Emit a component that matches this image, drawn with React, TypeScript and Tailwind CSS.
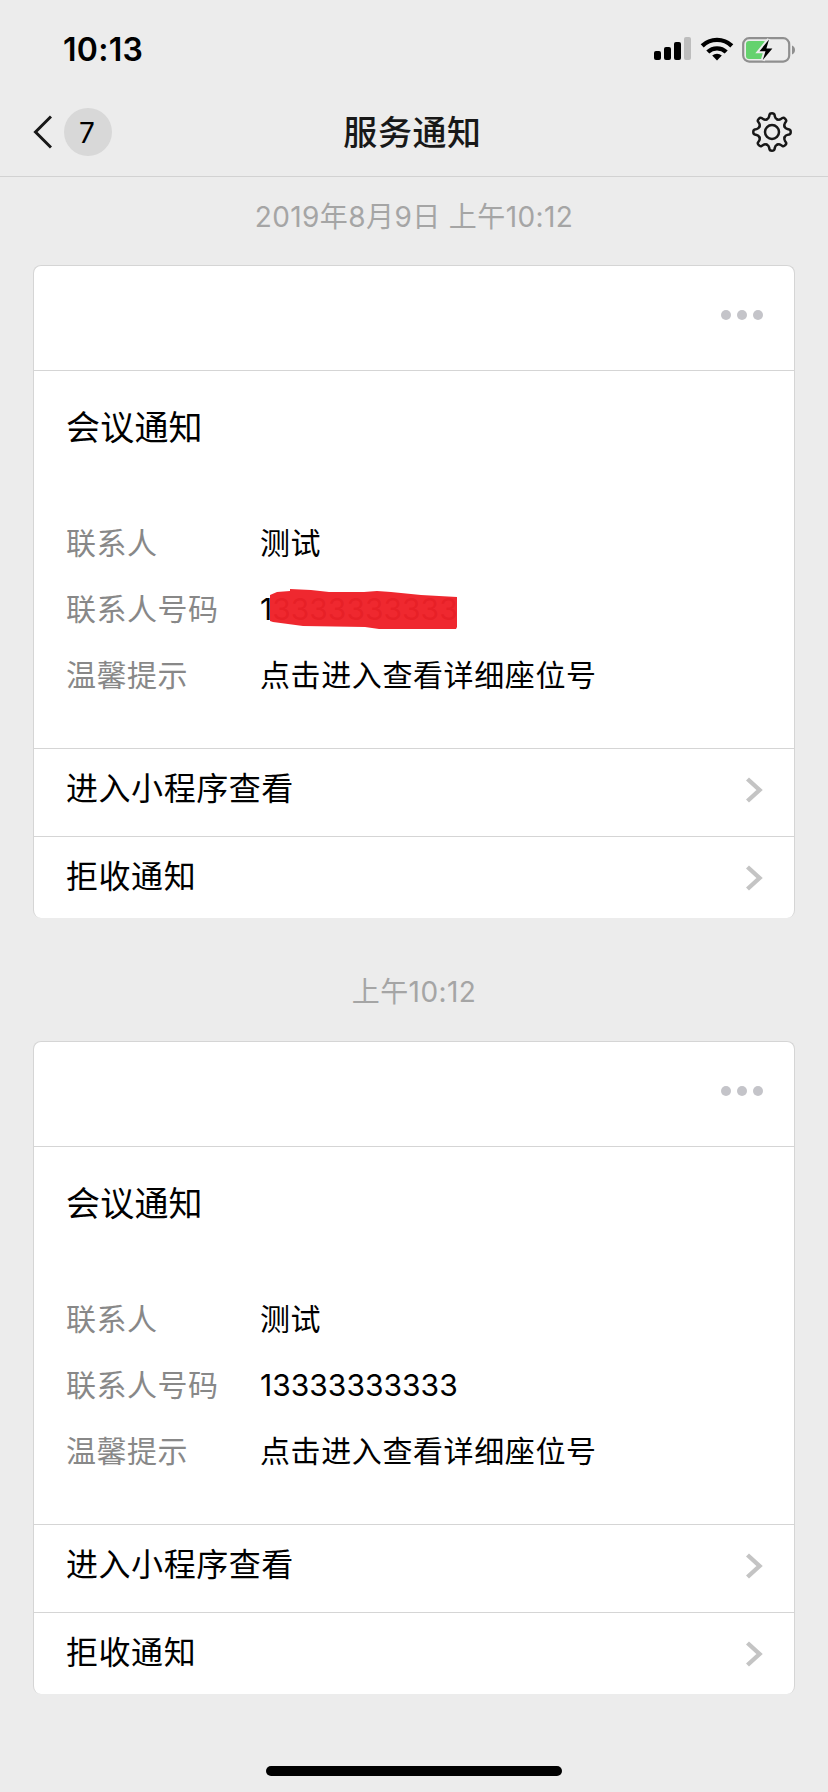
import { clsx } from "clsx";

interface Notice {
  time: string;
  contact: string;
  phone: string;
  tip: string;
  redacted?: boolean;
}

const notices: Notice[] = [
  {
    time: "2019年8月9日 上午10:12",
    contact: "测试",
    phone: "13333333333",
    tip: "点击进入查看详细座位号",
    redacted: true,
  },
  {
    time: "上午10:12",
    contact: "测试",
    phone: "13333333333",
    tip: "点击进入查看详细座位号",
  },
];

const SignalIcon = () => (
  <svg width="38" height="24" viewBox="0 0 38 24">
    <rect x="0" y="14" width="7" height="9" rx="2" />
    <rect x="10" y="10" width="7" height="13" rx="2" />
    <rect x="20" y="5" width="7" height="18" rx="2" />
    <rect x="30" y="0" width="7" height="23" rx="2" fill="#bdbdbd" />
  </svg>
);

const WifiIcon = () => (
  <svg width="34" height="24" viewBox="0 0 34 24" fill="none" stroke="#000" strokeWidth="4.4">
    <path d="M2.2 8.8a21.5 21.5 0 0 1 29.6 0" />
    <path d="M7.8 15a13.4 13.4 0 0 1 18.4 0" />
    <path d="M12.2 18.6a7.2 7.2 0 0 1 9.6 0L17 23.4z" fill="#000" stroke="none" />
  </svg>
);

const BatteryIcon = () => (
  <svg width="54" height="26" viewBox="0 0 54 26">
    <rect x="1.2" y="1.2" width="46" height="23.4" rx="6" fill="none" stroke="#8f8f8f" strokeWidth="2.2" />
    <path d="M50 8.5c4 1.4 4 7.6 0 9z" fill="#8f8f8f" />
    <rect x="4" y="4" width="20" height="18" rx="3" fill="#65d26e" />
    <path d="M27 2.5 17.5 14.2h6L20.8 23 30.4 11.4h-6z" fill="#000" stroke="#ededed" strokeWidth="4" paintOrder="stroke" />
  </svg>
);

const toothAngles = [0, 45, 90, 135, 180, 225, 270, 315];

const GearIcon = () => (
  <svg
    width="40"
    height="40"
    viewBox="-20 -20 40 40"
    fill="none"
    stroke="#181818"
    strokeWidth="2.5"
    strokeLinecap="round"
    strokeLinejoin="round"
  >
    {toothAngles.map((angle) => (
      <path
        key={angle}
        transform={`rotate(${angle})`}
        d="M-5.2 -12.6Q-3.3 -13.4 -2.9 -15.4L-2.5 -17.2Q-2.2 -18.7 0 -18.7Q2.2 -18.7 2.5 -17.2L2.9 -15.4Q3.3 -13.4 5.2 -12.6"
      />
    ))}
    <circle r="7" />
  </svg>
);

const ActionRow = ({ label, last }: { label: string; last?: boolean }) => (
  <div
    className={clsx(
      "flex items-start justify-between border-t border-[#d5d5d5] pl-8 pr-[31px]",
      last ? "h-[82px]" : "h-[88px]"
    )}
  >
    <span className="mt-[22px] text-[32px] leading-9 tracking-[0.55px]">{label}</span>
    <svg className="mt-[27px]" width="18" height="28" viewBox="0 0 18 28" fill="none" stroke="#c4c4c4" strokeWidth="4.4">
      <path d="M2.5 3 14.5 14 2.5 25" />
    </svg>
  </div>
);

const Scribble = () => (
  <svg className="absolute top-0 left-[9px]" width="190" height="42" viewBox="0 0 190 42">
    <path d="M1 7 8 4 21 3V1L42 2 60 4H95L108 3 122 4 152 7 188 9V39L187 41H110L96 39 34 38 4 34 1 33Z" fill="#ee2128" fillOpacity=".97" />
  </svg>
);

const Field = ({ label, value, redacted }: { label: string; value: string; redacted?: boolean }) => (
  <div className="flex h-[66px] items-center text-[30px]">
    <span className="w-[194px] tracking-[0.5px] text-[#888]">{label}</span>
    <span
      className={clsx(
        "relative whitespace-nowrap leading-[42px]",
        /^\d+$/.test(value) ? "tracking-[0.02px]" : "tracking-[0.6px]"
      )}
    >
      {value}
      {redacted && <Scribble />}
    </span>
  </div>
);

const NoticeCard = ({ notice }: { notice: Notice }) => (
  <section className="mx-[33px] flex h-[653px] flex-col overflow-hidden rounded-lg border border-b-0 border-[#d5d5d5] bg-white">
    <div className="flex h-[104px] shrink-0 justify-end gap-1.5 pr-[31px] pt-11">
      <i className="size-2.5 rounded-full bg-[#c4c4c9]" />
      <i className="size-2.5 rounded-full bg-[#c4c4c9]" />
      <i className="size-2.5 rounded-full bg-[#c4c4c9]" />
    </div>
    <div className="h-[378px] shrink-0 border-t border-[#d5d5d5] pl-8 pt-[37px]">
      <h2 className="mb-[62px] text-[34px] leading-10 tracking-[0.2px]">会议通知</h2>
      <Field label="联系人" value={notice.contact} />
      <Field label="联系人号码" value={notice.phone} redacted={notice.redacted} />
      <Field label="温馨提示" value={notice.tip} />
    </div>
    <ActionRow label="进入小程序查看" />
    <ActionRow label="拒收通知" last />
  </section>
);

export default function App() {
  return (
    <div className="flex h-[1792px] w-[828px] flex-col bg-[#ececec] font-['Inter','Noto_Sans_CJK_SC',sans-serif] text-black">
      {/* Status bar */}
      <div className="flex h-[88px] shrink-0 items-start justify-between pl-[63px] pr-8">
        <span className="mt-[30px] text-[32px] font-semibold leading-10 tracking-[0.3px]">10:13</span>
        <div className="mt-[37px] flex items-start">
          <SignalIcon />
          <div className="ml-[8px] mr-[8px]">
            <WifiIcon />
          </div>
          <BatteryIcon />
        </div>
      </div>

      {/* Nav bar */}
      <header className="grid h-[89px] shrink-0 grid-cols-[1fr_auto_1fr] items-center border-b border-[#d2d2d2] pl-[33px] pr-9">
        <div className="flex items-center gap-3">
          <svg width="19" height="34" viewBox="0 0 19 34" fill="none" stroke="#181818" strokeWidth="3">
            <path d="M18 1.5 2.5 17 18 32.5" />
          </svg>
          <span className="flex size-12 items-center justify-center rounded-full bg-[#d8d8d8] pr-0.5 pt-0.5 text-[28px]">7</span>
        </div>
        <h1 className="pt-0.5 text-[34px] font-medium leading-10 tracking-[0.6px] text-[#181818]">服务通知</h1>
        <div className="justify-self-end">
          <GearIcon />
        </div>
      </header>

      {notices.map((notice, i) => (
        <div key={notice.time}>
          <div
            className={clsx(
              "flex items-center justify-center text-[28px] tracking-[0.4px] text-[#a5a5a5]",
              i === 0 ? "h-[88px] pb-2" : "h-[123px] pt-6"
            )}
          >
            {notice.time}
          </div>
          <NoticeCard notice={notice} />
        </div>
      ))}

      <div className="mx-auto mb-4 mt-auto h-2.5 w-[296px] shrink-0 rounded-full bg-black" />
    </div>
  );
}
